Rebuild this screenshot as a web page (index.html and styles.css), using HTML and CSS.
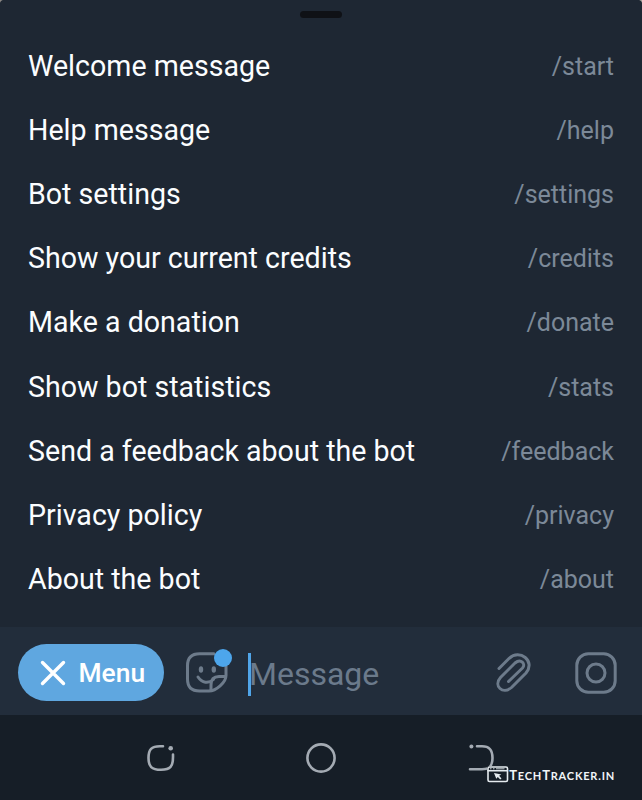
FILE: index.html
```html
<!DOCTYPE html>
<html lang="en">
<head>
<meta charset="utf-8">
<title>Bot menu</title>
<link rel="stylesheet" href="styles.css">
</head>
<body>
<main class="sheet">
  <div class="handle"></div>
  <ul class="commands">
    <li class="command"><span>Welcome message</span><span class="slash">/start</span></li>
    <li class="command"><span>Help message</span><span class="slash">/help</span></li>
    <li class="command"><span>Bot settings</span><span class="slash">/settings</span></li>
    <li class="command"><span>Show your current credits</span><span class="slash">/credits</span></li>
    <li class="command"><span>Make a donation</span><span class="slash">/donate</span></li>
    <li class="command"><span>Show bot statistics</span><span class="slash">/stats</span></li>
    <li class="command"><span>Send a feedback about the bot</span><span class="slash">/feedback</span></li>
    <li class="command"><span>Privacy policy</span><span class="slash">/privacy</span></li>
    <li class="command"><span>About the bot</span><span class="slash">/about</span></li>
  </ul>
</main>
<section class="composer">
  <button class="menu">
    <svg width="24" height="24" viewBox="0 0 24 24"><path d="M1.500 1.500 22.500 22.500M22.500 1.500 1.500 22.500"/></svg>
    <span>Menu</span>
  </button>
  <svg class="icon sticker" width="48" height="48" viewBox="0 0 48 48">
    <path d="M31 4.800H16.500Q4.500 4.800 4.500 16.800V30Q4.500 42 16.500 42H26C33 42 43 33.500 43 26.500V17"/>
    <path d="M28 41.500V36Q28 27.500 36 27.500H42.500M15 28C19 34 25.500 35 30.500 30.500"/>
    <ellipse class="fill" cx="18" cy="20.500" rx="2.200" ry="3.200"/><ellipse class="fill" cx="30.800" cy="20.500" rx="2.200" ry="3.200"/>
    <circle class="dot" cx="40" cy="9" r="9"/>
  </svg>
  <div class="field"><i class="caret"></i><span>Message</span></div>
  <svg class="icon clip" width="40" height="44" viewBox="0 0 40 44">
    <path d="M4 18.500 14.200 8.300C24.500-1.500 41 11 31 23L16.500 37.500C8 45 -2 36 5.500 27.500L20 13C26 8 31 14 27.500 18L13.500 31.500"/>
  </svg>
  <svg class="icon camera" width="42" height="42" viewBox="0 0 42 42">
    <rect x="1.800" y="1.800" width="38.400" height="38.400" rx="11.500"/><circle cx="21" cy="21" r="9"/>
  </svg>
</section>
<nav class="system">
  <svg width="28" height="28" viewBox="0 0 28 28"><path d="M16 2.200H13C4.500 2.200 1.500 5.500 1.500 14S4.500 25.800 14 25.800 26 22.500 26 13V10.500"/><circle class="nav-dot" cx="23.700" cy="4.200" r="2.300"/></svg>
  <svg width="30" height="30" viewBox="0 0 30 30"><circle cx="14" cy="15" r="13.600"/></svg>
  <svg width="28" height="28" viewBox="0 0 28 28"><path d="M9 2.200H14C21.500 2.200 24.500 6 24.500 14S21.500 25.300 14 25.300H2"/><circle class="nav-dot" cx="3.400" cy="2.400" r="2"/></svg>
  <div class="watermark">
    <svg width="22" height="17" viewBox="0 0 22 17"><rect class="frame" x="1" y="1" width="19.500" height="14.500" rx="1.500"/><path class="frame" d="M1 4.700H20.500"/><path class="dots" d="M3 2.800H4.500M6 2.800H7.500M9 2.800H17.500"/><path class="cursor" d="m7 7 7.300 1.500-2.200 1.300 2.400 2.600-1.300 1-2.400-2.400-1.500 1.800z"/></svg>
    <span class="brand">T<small>ECH</small>T<small>RACKER.IN</small></span>
  </div>
</nav>
</body>
</html>
```

FILE: styles.css
```css
* { box-sizing: border-box; }
body {
  margin: 0;
  width: 642px;
  height: 800px;
  overflow: hidden;
  background: #1e2733;
  font-family: Roboto, sans-serif;
  display: flex;
  flex-direction: column;
}
svg { display: block; flex: none; overflow: visible; fill: none; stroke-linecap: round; stroke-linejoin: round; }
.sheet {
  height: 627px;
  padding-top: 11px;
  background: radial-gradient(circle at 5px 5px, #1e2733 5px, #8d8985 6px) 0 0 / 5px 5px no-repeat, radial-gradient(circle at 0 5px, #1e2733 5px, #aaa69f 6px) 100% 0 / 5px 5px no-repeat, #1e2733;
}
.handle { width: 42px; height: 7px; margin: 0 auto; border-radius: 4px; background: #0f1116; }
.commands { list-style: none; margin: 0; padding: 15.5px 28px 0; }
.command {
  height: 64.2px;
  display: flex;
  align-items: center;
  justify-content: space-between;
  color: #fbfdff;
  font-size: 28.6px;
  white-space: nowrap;
}
.slash { color: #7c8998; font-size: 25px; padding-top: 1px; }
.composer { height: 88px; background: #222d3b; display: flex; align-items: center; padding: 0 25px 0 18px; }
.menu {
  width: 146px;
  height: 57px;
  margin: 3px 0 0;
  padding: 0 0 0 23px;
  border: 0;
  border-radius: 29px;
  background: #5fa7e0;
  color: #fff;
  display: flex;
  align-items: center;
  gap: 13.5px;
  font: 500 26.4px Roboto, sans-serif;
}
.menu svg { stroke: #fff; stroke-width: 3.4; }
.icon { stroke: #6d7b8b; stroke-width: 3; }
.sticker { margin: 3px 0 0 19px; }
.fill { fill: #6d7b8b; stroke: none; }
.dot { fill: #4da6ec; stroke: none; }
.field { display: flex; align-items: center; flex: 1; margin: 6px 0 0 17px; color: #6b7a8b; font-size: 32px; }
.caret { width: 3px; height: 43px; margin-right: -2px; background: #50a5e9; }
.clip { margin: 1px 40px 0 0; }
.camera { margin-top: 3px; }
.system { height: 85px; background: #161e27; display: flex; align-items: center; padding: 1px 146px 0 147px; justify-content: space-between; position: relative; }
.system > svg { stroke: #a4abb3; stroke-width: 2.6; }
.nav-dot { fill: #a4abb3; stroke: none; }
.watermark { position: absolute; right: 27px; bottom: 16px; display: flex; align-items: center; color: #f1f5f8; }
.watermark svg { background: #161e27; }
.frame { stroke: #e5ebef; stroke-width: 1.6; }
.dots { stroke: #c9d0d5; stroke-width: 1; stroke-linecap: butt; }
.cursor { fill: #e5ebef; }
.brand { padding-top: 3px; font: 700 13px/17px Lato, sans-serif; letter-spacing: .8px; }
.brand small { font-size: 11px; }
```
